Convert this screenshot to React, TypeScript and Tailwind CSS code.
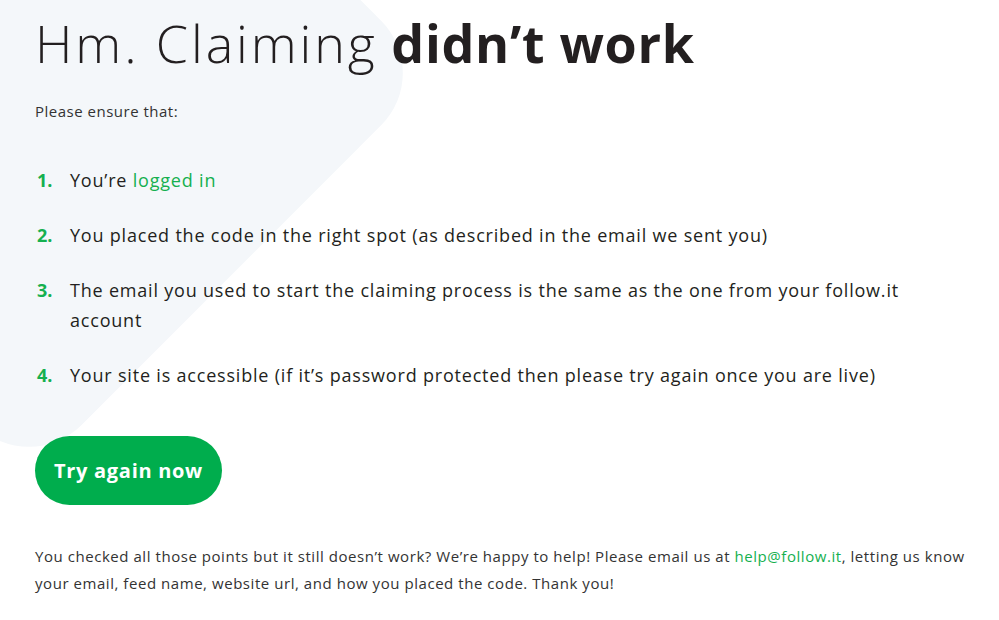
import React from "react";

const items: React.ReactNode[] = [
  <>
    You’re <a className="text-[#15b04f]">logged in</a>
  </>,
  <>You placed the code in the right spot (as described in the email we sent you)</>,
  <>
    The email you used to start the claiming process is the same as the one from your follow.it
    <br />
    account
  </>,
  <>Your site is accessible (if it’s password protected then please try again once you are live)</>,
];

export default function App() {
  return (
    <div
      className="relative w-[999px] h-[620px] overflow-hidden bg-white text-[#231f20]"
      style={{ fontFamily: '"Open Sans", sans-serif' }}
    >
      <div className="absolute left-[-257px] top-[-213px] w-[572px] h-[572px] rotate-45 rounded-[74px] bg-[#f4f7fa]" />
      <div className="relative px-[35px] pt-[12px]">
        <h1 className="text-[52px] leading-[62px] font-light whitespace-nowrap">
          <span className="tracking-[2.9px]">Hm. Claiming</span>{" "}
          <span className="font-bold tracking-[0.7px]">didn’t work</span>
        </h1>
        <p className="mt-[25px] text-[15px] leading-[24px] tracking-[0.5px] text-[#333]">Please ensure that:</p>
        <ol className="mt-[42px] flex flex-col gap-[25px]">
          {items.map((it, i) => (
            <li key={i} className="flex text-[18px] leading-[30px] tracking-[0.8px]">
              <span className="w-[35px] shrink-0 pl-[2px] font-bold tracking-normal text-[#15b04f]">{i + 1}.</span>
              <span className="whitespace-nowrap">{it}</span>
            </li>
          ))}
        </ol>
        <button className="mt-[46px] flex h-[69px] w-[187px] items-center justify-center rounded-full bg-[#00ad4d] text-[20px] font-bold tracking-[0.7px] text-white">
          Try again now
        </button>
        <p className="mt-[38px] text-[15px] leading-[27px] tracking-[0.55px] text-[#333] whitespace-nowrap">
          You checked all those points but it still doesn’t work? We’re happy to help! Please email us at{" "}
          <a className="text-[#15b04f]">help@follow.it</a>, letting us know
          <br />
          your email, feed name, website url, and how you placed the code. Thank you!
        </p>
      </div>
    </div>
  );
}
